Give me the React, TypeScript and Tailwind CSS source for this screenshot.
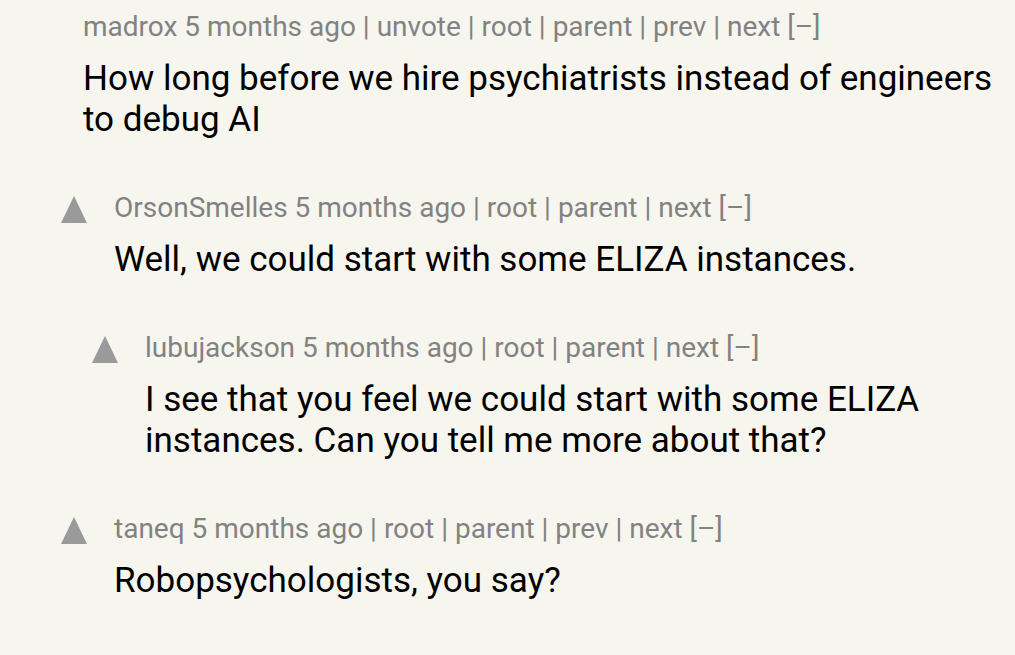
const comments = [
  {
    user: "madrox",
    depth: 0,
    voted: true,
    links: ["unvote", "root", "parent", "prev", "next"],
    text: "How long before we hire psychiatrists instead of engineers to debug AI",
  },
  {
    user: "OrsonSmelles",
    depth: 1,
    voted: false,
    links: ["root", "parent", "next"],
    text: "Well, we could start with some ELIZA instances.",
  },
  {
    user: "lubujackson",
    depth: 2,
    voted: false,
    links: ["root", "parent", "next"],
    text: "I see that you feel we could start with some ELIZA instances. Can you tell me more about that?",
  },
  {
    user: "taneq",
    depth: 1,
    voted: false,
    links: ["root", "parent", "prev", "next"],
    text: "Robopsychologists, you say?",
  },
]

function VoteArrow({ hidden }: { hidden: boolean }) {
  return (
    <svg width="26" height="27" viewBox="0 0 26 27" className={hidden ? "invisible" : ""}>
      <polygon points="13,0 26,27 0,27" fill="#9a9a9a" />
    </svg>
  )
}

export default function App() {
  return (
    <div
      className="w-[1015px] h-[655px] overflow-hidden bg-[#f6f6ef] pt-[11px] pl-[30px] pr-[10px]"
      style={{ fontFamily: "Roboto, 'Noto Sans', sans-serif" }}
    >
      {comments.map((c) => (
        <div key={c.user} className="flex pb-[52px]" style={{ paddingLeft: c.depth * 31 }}>
          <div className="w-[53px] shrink-0 pt-[4px]">
            <VoteArrow hidden={c.voted} />
          </div>
          <div className="flex-1 min-w-0">
            <div className="text-[28px] leading-[32px] text-[#828282] whitespace-nowrap">
              {c.user} 5 months ago
              {c.links.map((l) => (
                <span key={l}> | {l}</span>
              ))}{" "}
              [–]
            </div>
            <div className="mt-[15px] text-[35px] leading-[41px] text-black">{c.text}</div>
          </div>
        </div>
      ))}
    </div>
  )
}
